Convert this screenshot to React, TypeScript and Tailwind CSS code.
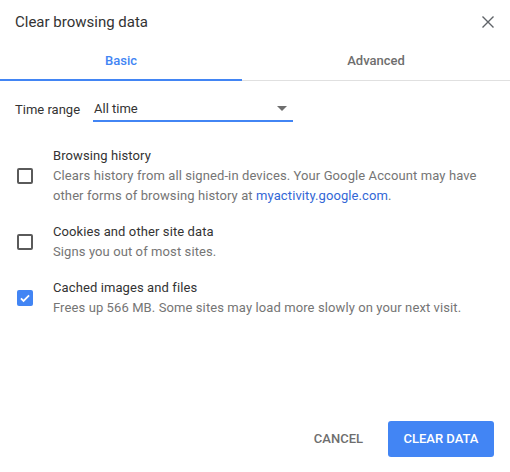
import React from "react";

function Checkbox({ checked }: { checked?: boolean }) {
  if (checked) {
    return (
      <div className="w-4 h-4 rounded-[2px] bg-[#4285f4] flex items-center justify-center shrink-0">
        <svg width="14" height="14" viewBox="0 0 24 24">
          <path d="M5 12.5l4.5 4.5L19 7.5" fill="none" stroke="#fff" strokeWidth="3" />
        </svg>
      </div>
    );
  }
  return <div className="w-4 h-4 rounded-[2px] border-2 border-[#5a5a5a] shrink-0" />;
}

function Item({
  title,
  children,
  checked,
}: {
  title: string;
  children: React.ReactNode;
  checked?: boolean;
}) {
  return (
    <div className="flex items-center">
      <div className="w-[53px] pl-[17px] flex items-center shrink-0">
        <Checkbox checked={checked} />
      </div>
      <div className="text-[13px] leading-[20px] tracking-[0.1px]">
        <div className="text-[#333333]">{title}</div>
        <div className="text-[#757575]">{children}</div>
      </div>
    </div>
  );
}

export default function App() {
  return (
    <div
      className="w-[510px] h-[472px] bg-white flex flex-col"
      style={{ fontFamily: "Roboto, 'Liberation Sans', sans-serif" }}
    >
      <div className="h-[42px] flex items-center justify-between pl-[15px] pr-[15px] pt-[2px]">
        <div className="text-[15px] text-[#333333]">Clear browsing data</div>
        <svg width="12" height="12" viewBox="0 0 12 12" className="mr-[1px]">
          <path d="M0.5 0.5L11.5 11.5M11.5 0.5L0.5 11.5" stroke="#5f6368" strokeWidth="1.4" />
        </svg>
      </div>
      <div className="flex h-[39px] border-b border-[#e0e0e0]">
        <div className="w-[242px] relative flex items-center justify-center text-[13px] font-medium text-[#4285f4]">
          Basic
          <div className="absolute left-0 right-0 bottom-[-1px] h-[2px] bg-[#4285f4]" />
        </div>
        <div className="flex-1 flex items-center justify-center text-[13px] font-medium text-[#6e6e6e]">
          Advanced
        </div>
      </div>
      <div className="flex items-center pl-[15px] mt-[16px] h-[25px]">
        <div className="text-[13px] text-[#333333] w-[78px]">Time range</div>
        <div className="w-[200px] h-[25px] border-b-2 border-[#4285f4] flex items-center justify-between pr-[6px] text-[13px] text-[#333333]">
          <span className="pl-[1px] pt-[1px]">All time</span>
          <svg width="10" height="5" viewBox="0 0 10 5">
            <path d="M0 0h10L5 5z" fill="#6e6e6e" />
          </svg>
        </div>
      </div>
      <div className="flex flex-col gap-[16px] mt-[24px]">
        <Item title="Browsing history">
          Clears history from all signed-in devices. Your Google Account may have
          <br />
          other forms of browsing history at{" "}
          <span className="text-[#3367d6]">myactivity.google.com</span>.
        </Item>
        <Item title="Cookies and other site data">Signs you out of most sites.</Item>
        <Item title="Cached images and files" checked>
          Frees up 566 MB. Some sites may load more slowly on your next visit.
        </Item>
      </div>
      <div className="mt-auto mb-[15px] flex justify-end items-center gap-[13px] pr-[16px]">
        <div className="h-[36px] px-[12px] flex items-center text-[13px] font-medium text-[#6e6e6e]">
          CANCEL
        </div>
        <div className="h-[36px] w-[106px] rounded-[3px] bg-[#4285f4] flex items-center justify-center text-[13px] font-medium text-white">
          CLEAR DATA
        </div>
      </div>
    </div>
  );
}
